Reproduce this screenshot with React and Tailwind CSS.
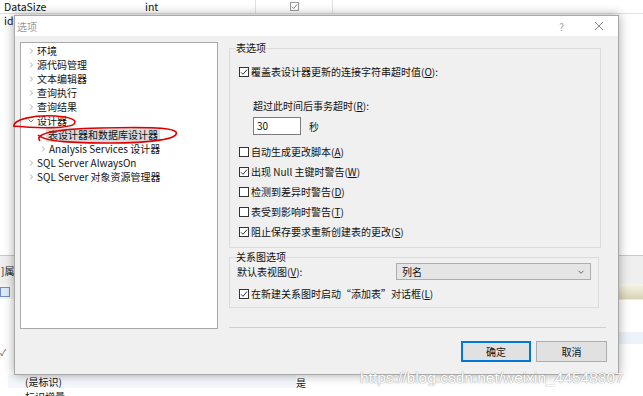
import React from "react";

const font = "font-['Microsoft_YaHei','Noto_Sans_CJK_SC',sans-serif]";

/* ---------------- SMALL PARTS ---------------- */
const Box = ({ on }) => (
  <span className="w-[10px] h-[10px] border border-[#333] bg-white flex items-center justify-center shrink-0">
    {on && (
      <svg width="8" height="8" viewBox="0 0 8 8">
        <path d="M1 4.3 L3 6.3 L7 1.6" fill="none" stroke="#333" strokeWidth="1" />
      </svg>
    )}
  </span>
);

const Check = ({ on, children }) => (
  <div className="flex items-center gap-[2px] h-[20px] text-[10px] leading-[14px] text-[#111]">
    <Box on={on} />
    <span>{children}</span>
  </div>
);

const Chevron = ({ open }) => (
  <svg width="8" height="8" viewBox="0 0 8 8" className="shrink-0">
    {open ? (
      <path d="M1.5 2.5 L4 5 L6.5 2.5" fill="none" stroke="#777" strokeWidth="1" />
    ) : (
      <path d="M3 1.5 L5.5 4 L3 6.5" fill="none" stroke="#aaa" strokeWidth="1" />
    )}
  </svg>
);

const TreeItem = ({ label, indent = 0, open, leaf, selected }) => (
  <div
    className={`flex items-center h-[14px] text-[10px] leading-[14px] text-[#111] ${
      indent ? "pl-[18px]" : "pl-[6px]"
    }`}
  >
    {leaf ? <span className="w-[7px] shrink-0" /> : <Chevron open={open} />}
    <span className={selected ? "bg-[#d9d9d9] px-[2px]" : "ml-[2px]"}>{label}</span>
  </div>
);

/* ---------------- MAIN ---------------- */
export default function App() {
  return (
    <div className={`relative w-[643px] h-[396px] bg-white overflow-hidden ${font}`}>
      {/* BACKGROUND APP */}
      <div className="flex flex-col text-[10.5px] text-[#111]">
        <div className="flex h-[14px] border-b border-[#e2e2e2] leading-[14px]">
          <div className="w-[138px] pl-[4px]">DataSize</div>
          <div className="w-[117px] pl-[7px]">int</div>
          <div className="w-[78px] border-x border-[#e2e2e2] flex items-center justify-center">
            <span className="w-[9px] h-[9px] border border-[#999] flex items-center justify-center">
              <svg width="7" height="7" viewBox="0 0 8 8">
                <path d="M1 4.3 L3 6.3 L7 1.6" fill="none" stroke="#777" strokeWidth="1" />
              </svg>
            </span>
          </div>
        </div>
        <div className="h-[14px] pl-[4px] leading-[14px]">id</div>
        <div className="h-[227px]" />
        <div className="h-[29px] border-t border-[#c9c9c9] bg-[#efefef] flex items-center text-[10px]">
          <span className="pl-[1px]">]属性</span>
        </div>
        <div className="h-[15px] flex">
          <div className="w-[14px] bg-[#f3f3f3] flex items-center">
            <span className="w-[10px] h-[10px] border border-[#6b8fc7] bg-[#dfe9f7]" />
          </div>
          <div className="flex-1" />
          <div className="w-[25px] bg-gradient-to-b from-[#f7f5ea] to-[#d9d3b4]" />
        </div>
        <div className="h-[33px] flex">
          <div className="flex-1" />
          <div className="w-[25px] border-t border-[#eaeaea]" />
        </div>
        <div className="h-[12px] flex">
          <div className="flex-1" />
          <div className="w-[25px] bg-[#eef3fb]" />
        </div>
        <div className="h-[30px] flex">
          <div className="w-[14px] text-[9px] text-[#555] pt-[2px]">✓</div>
        </div>
        <div className="h-[14px] flex items-center bg-[#f4f7fb] ml-[8px] w-[288px] text-[10px]">
          <span className="pl-[17px]">(是标识)</span>
        </div>
      </div>
      <div className="absolute left-[296px] top-[376px] text-[10px] leading-[14px] text-[#111]">是</div>
      <div className="absolute left-[25px] top-[390px] text-[10px] leading-[14px] text-[#111]">标识增量</div>

      {/* DIALOG */}
      <div className="absolute left-[14px] top-[15px] w-[605px] h-[360px] bg-[#f0f0f0] border border-[#a8a8a8] shadow-[0_0_10px_rgba(0,0,0,0.35)] flex flex-col">
        {/* TITLE BAR */}
        <div className="h-[20px] bg-white flex items-center shrink-0">
          <span className="pl-[2px] text-[10px] text-[#9a9a9a]">选项</span>
          <span className="ml-auto text-[10px] text-[#9a9a9a] mr-[30px]">?</span>
          <svg width="10" height="10" viewBox="0 0 10 10" className="mr-[14px]">
            <path d="M1 1 L9 9 M9 1 L1 9" stroke="#8a8a8a" strokeWidth="1" />
          </svg>
        </div>

        {/* BODY */}
        <div className="flex flex-1">
          {/* TREE */}
          <div className="ml-[5px] mt-[6px] w-[198px] h-[287px] bg-white border border-[#a9a9a9] pt-px">
            <TreeItem label="环境" />
            <TreeItem label="源代码管理" />
            <TreeItem label="文本编辑器" />
            <TreeItem label="查询执行" />
            <TreeItem label="查询结果" />
            <TreeItem label="设计器" open />
            <TreeItem label="表设计器和数据库设计器" indent leaf selected />
            <TreeItem label="Analysis Services 设计器" indent />
            <TreeItem label="SQL Server AlwaysOn" />
            <TreeItem label="SQL Server 对象资源管理器" />
          </div>

          {/* OPTIONS */}
          <div className="ml-[11px] w-[378px] flex flex-col">
            <fieldset className="mt-[5px] w-[372px] border border-[#dcdcdc] pl-[9px] pb-[5px]">
              <legend className="-ml-[3px] text-[10px] leading-[14px] text-[#111]">表选项</legend>
              <div className="pt-[7px]">
                <Check on>
                  覆盖表设计器更新的连接字符串超时值(<u>O</u>):
                </Check>
              </div>
              <div className="mt-[17px] ml-[14px] text-[10px] leading-[14px] text-[#111]">
                超过此时间后事务超时(<u>R</u>):
              </div>
              <div className="mt-[4px] ml-[14px] flex items-center gap-[8px]">
                <div className="w-[48px] h-[18px] bg-white border border-[#7a7a7a] text-[10px] leading-[16px] pl-[3px] text-[#111]">
                  30
                </div>
                <span className="text-[10px] text-[#111]">秒</span>
              </div>
              <div className="mt-[7px]">
                <Check>
                  自动生成更改脚本(<u>A</u>)
                </Check>
                <Check on>
                  出现 Null 主键时警告(<u>W</u>)
                </Check>
                <Check>
                  检测到差异时警告(<u>D</u>)
                </Check>
                <Check>
                  表受到影响时警告(<u>T</u>)
                </Check>
                <Check on>
                  阻止保存要求重新创建表的更改(<u>S</u>)
                </Check>
              </div>
            </fieldset>

            <fieldset className="mt-[2px] w-[370px] border border-[#dcdcdc] pl-[7px] pr-[7px] pb-[3px]">
              <legend className="-ml-[1px] text-[10px] leading-[14px] text-[#111]">关系图选项</legend>
              <div className="-mt-[1px] flex items-center h-[17px]">
                <span className="text-[10px] text-[#111]">
                  默认表视图(<u>V</u>):
                </span>
                <div className="ml-auto w-[195px] h-[17px] bg-[#e5e5e5] border border-[#adadad] flex items-center px-[5px]">
                  <span className="text-[10px] text-[#111]">列名</span>
                  <svg width="8" height="8" viewBox="0 0 8 8" className="ml-auto">
                    <path d="M1.5 2.8 L4 5.3 L6.5 2.8" fill="none" stroke="#666" strokeWidth="1" />
                  </svg>
                </div>
              </div>
              <div className="mt-[4px] ml-[2px]">
                <Check on>
                  在新建关系图时启动“添加表”对话框(<u>L</u>)
                </Check>
              </div>
            </fieldset>

            <div className="mt-[19px] w-[377px] h-px bg-[#cfcfcf]" />

            <div className="mt-[13px] flex justify-end gap-[5px]">
              <button className="w-[70px] h-[21px] bg-[#e1e1e1] border-2 border-[#0078d7] text-[10px] text-[#111]">
                确定
              </button>
              <button className="w-[71px] h-[21px] bg-[#e1e1e1] border border-[#adadad] text-[10px] text-[#111]">
                取消
              </button>
            </div>
          </div>
        </div>
      </div>

      {/* RED ANNOTATIONS */}
      <svg className="absolute left-0 top-0 pointer-events-none" width="643" height="396">
        <path
          d="M 14 127 C 12 119, 35 115, 55 116 C 70 117, 78 120, 74 124 C 70 128, 40 129, 14 126"
          fill="none"
          stroke="#e00000"
          strokeWidth="1.6"
        />
        <path
          d="M 40 141 C 34 134, 52 129, 100 128 C 140 127, 172 127, 176 132 C 180 139, 150 143, 110 143 C 75 143, 45 142, 38 135"
          fill="none"
          stroke="#e00000"
          strokeWidth="1.6"
        />
      </svg>

      {/* WATERMARK */}
      <div className="absolute left-[360px] top-[368px] text-[15.5px] leading-[20px] text-white font-['Liberation_Sans',sans-serif] [text-shadow:0_0_1px_#9a9a9a,0_0_1px_#9a9a9a]">
        https://blog.csdn.net/weixin_44548307
      </div>
    </div>
  );
}
